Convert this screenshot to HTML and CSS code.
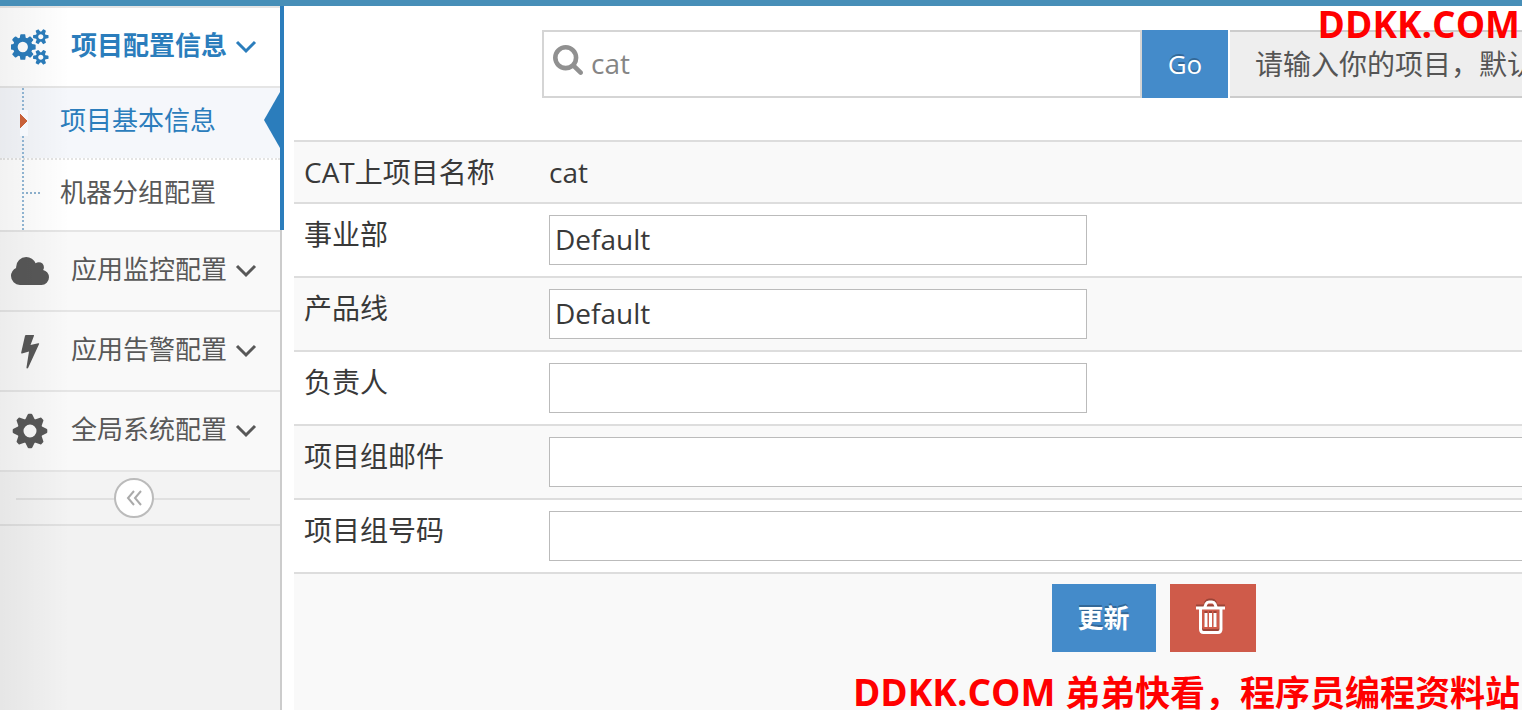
FILE: index.html
```html
<!DOCTYPE html>
<html lang="zh-CN">
  <head>
    <meta charset="UTF-8" />
    <meta name="viewport" content="width=device-width, initial-scale=1.0" />
    <title>CAT</title>
    <link rel="stylesheet" href="styles.css">
  </head>
  <body>
    <header class="navbar"></header>
    <div class="layout">
      <nav class="sidebar">
        <ul class="nav-list">
          <li class="open">
            <a class="nav-link" href="#">
              <span class="nav-icon">
                <svg width="39" height="36" viewBox="0 0 1920 1792" fill="currentColor"><path d="M832 896q0-106-75-181t-181-75-181 75-75 181 75 181 181 75 181-75 75-181zm768 512q0-52-38-90t-90-38-90 38-38 90q0 53 37.5 90.5t90.5 37.5 90.5-37.5 37.5-90.5zm0-1024q0-52-38-90t-90-38-90 38-38 90q0 53 37.5 90.5t90.5 37.5 90.5-37.5 37.5-90.5zm-384 421v185q0 10-7 19.5t-16 10.5l-155 24q-11 35-32 76 34 48 90 115 7 10 7 20 0 12-7 19-23 30-82.5 89.5t-78.5 59.5q-11 0-21-7l-115-90q-37 19-77 31-11 108-23 155-7 24-30 24h-186q-11 0-20-7.5t-10-17.5l-23-153q-34-10-75-31l-118 89q-7 7-20 7-11 0-21-8-144-133-144-160 0-9 7-19 10-14 41-53t47-61q-23-44-35-82l-152-24q-10-1-17-9.5t-7-19.5v-185q0-10 7-19.5t16-10.5l155-24q11-35 32-76-34-48-90-115-7-11-7-20 0-12 7-20 22-30 82-89t79-59q11 0 21 7l115 90q34-18 77-32 11-108 23-154 7-24 30-24h186q11 0 20 7.5t10 17.5l23 153q34 10 75 31l118-89q8-7 20-7 11 0 21 8 144 133 144 160 0 9-7 19-12 16-42 54t-45 60q23 48 34 82l152 23q10 2 17 10.5t7 19.5zm640 533v140q0 16-149 31-12 27-30 52 51 113 51 138 0 4-4 7-122 71-124 71-8 0-46-47t-52-68q-20 2-30 2t-30-2q-14 21-52 68t-46 47q-2 0-124-71-4-3-4-7 0-25 51-138-18-25-30-52-149-15-149-31v-140q0-16 149-31 13-29 30-52-51-113-51-138 0-4 4-7 4-2 35-20t59-34 30-16q8 0 46 46.5t52 67.5q20-2 30-2t30 2q51-71 92-112l6-2q4 0 124 70 4 3 4 7 0 25-51 138 17 23 30 52 149 15 149 31zm0-1024v140q0 16-149 31-12 27-30 52 51 113 51 138 0 4-4 7-122 71-124 71-8 0-46-47t-52-68q-20 2-30 2t-30-2q-14 21-52 68t-46 47q-2 0-124-71-4-3-4-7 0-25 51-138-18-25-30-52-149-15-149-31v-140q0-16 149-31 13-29 30-52-51-113-51-138 0-4 4-7 4-2 35-20t59-34 30-16q8 0 46 46.5t52 67.5q20-2 30-2t30 2q51-71 92-112l6-2q4 0 124 70 4 3 4 7 0 25-51 138 17 23 30 52 149 15 149 31z"/></svg>
              </span>
              <span class="nav-text">项目配置信息</span>
              <svg class="chevron" width="22" height="14" viewBox="0 0 22 14"><path d="M2 2l9 9 9-9"/></svg>
            </a>
            <ul class="submenu">
              <li class="active"><a href="#">项目基本信息</a></li>
              <li><a href="#">机器分组配置</a></li>
            </ul>
          </li>
          <li>
            <a class="nav-link" href="#">
              <span class="nav-icon">
                <svg width="38" height="28" viewBox="64 128 1920 1408" fill="currentColor"><path d="M1984 1152q0 159-112.5 271.5t-271.5 112.5h-1088q-185 0-316.5-131.5t-131.5-316.5q0-132 71-241.5t187-163.5q-2-28-2-43 0-212 150-362t362-150q158 0 286.5 88t187.5 230q70-62 166-62 106 0 181 75t75 181q0 75-41 138 129 30 213 134.5t84 239.5z"/></svg>
              </span>
              <span class="nav-text">应用监控配置</span>
              <svg class="chevron" width="22" height="14" viewBox="0 0 22 14"><path d="M2 2l9 9 9-9"/></svg>
            </a>
          </li>
          <li>
            <a class="nav-link" href="#">
              <span class="nav-icon">
                <svg width="20" height="36" viewBox="0 0 20 36" fill="currentColor"><path d="M6 2h7.500q.8 0 .5.800L10.500 12l7.800-1.800q1.200-.2.800.9L8.200 34.800q-.5.900-1.300.7-.6-.2-.4-1.200L9 18.500 2 20.500q-1.100.2-.8-1L5 2.800Q5.200 2 6 2z"/></svg>
              </span>
              <span class="nav-text">应用告警配置</span>
              <svg class="chevron" width="22" height="14" viewBox="0 0 22 14"><path d="M2 2l9 9 9-9"/></svg>
            </a>
          </li>
          <li>
            <a class="nav-link" href="#">
              <span class="nav-icon">
                <svg width="36" height="36" viewBox="-18 -18 36 36" fill="currentColor">
                  <circle r="9.500" fill="none" stroke="currentColor" stroke-width="6"/>
                  <path id="tooth" d="M-5-11L-2.300-16.500Q-2-17.300-1.300-17.300H1.300Q2-17.300 2.300-16.500L5-11z"/>
                  <use href="#tooth" transform="rotate(45)"/>
                  <use href="#tooth" transform="rotate(90)"/>
                  <use href="#tooth" transform="rotate(135)"/>
                  <use href="#tooth" transform="rotate(180)"/>
                  <use href="#tooth" transform="rotate(225)"/>
                  <use href="#tooth" transform="rotate(270)"/>
                  <use href="#tooth" transform="rotate(315)"/>
                </svg>
              </span>
              <span class="nav-text">全局系统配置</span>
              <svg class="chevron" width="22" height="14" viewBox="0 0 22 14"><path d="M2 2l9 9 9-9"/></svg>
            </a>
          </li>
        </ul>
        <div class="sidebar-toggle">
          <button type="button" aria-label="收起菜单">
            <svg width="16" height="18" viewBox="0 0 16 18"><path d="M8 2L2 9l6 7M15 2L9 9l6 7"/></svg>
          </button>
        </div>
      </nav>

      <main class="content">
        <form class="search">
          <label class="search-box">
            <svg width="30" height="30" viewBox="64 128 1664 1664" fill="currentColor"><path d="M1216 832q0-185-131.500-316.500t-316.500-131.500-316.500 131.500-131.500 316.500 131.500 316.500 316.500 131.500 316.500-131.500 131.500-316.500zm512 832q0 52-38 90t-90 38q-54 0-90-38l-343-342q-179 124-399 124-143 0-273.500-55.500t-225-150-150-225-55.500-273.500 55.500-273.500 150-225 225-150 273.500-55.500 273.500 55.500 225 150 150 225 55.500 273.500q0 220-124 399l343 343q37 37 37 90z"/></svg>
            <input type="text" value="cat" aria-label="项目">
          </label>
          <button class="btn btn-primary" type="button">Go</button>
          <span class="search-hint">请输入你的项目，默认</span>
        </form>

        <table class="form-table">
          <tr>
            <td class="name">CAT上项目名称</td>
            <td>cat</td>
          </tr>
          <tr>
            <td class="name"><label for="department">事业部</label></td>
            <td><input type="text" id="department" value="Default"></td>
          </tr>
          <tr>
            <td class="name"><label for="product">产品线</label></td>
            <td><input type="text" id="product" value="Default"></td>
          </tr>
          <tr>
            <td class="name"><label for="owner">负责人</label></td>
            <td><input type="text" id="owner"></td>
          </tr>
          <tr>
            <td class="name"><label for="email">项目组邮件</label></td>
            <td><input class="wide" type="text" id="email"></td>
          </tr>
          <tr>
            <td class="name"><label for="phone">项目组号码</label></td>
            <td><input class="wide" type="text" id="phone"></td>
          </tr>
          <tr>
            <td colspan="2">
              <div class="actions">
                <button class="btn btn-primary btn-update" type="button">更新</button>
                <button class="btn btn-danger" type="button" aria-label="删除">
                  <svg width="30" height="36" viewBox="0 0 30 36"><path d="M0 8h29M8.500 8l1.500-4q1-2 3-2h3q2 0 3 2l1.500 4M4.500 8v21q0 3.500 3 3.500h14.500q3 0 3-3.500V8"/><path d="M10 13v14M14.500 13v14M19 13v14"/></svg>
                </button>
              </div>
            </td>
          </tr>
        </table>
      </main>
    </div>

    <div class="mark mark-top">DDKK.COM</div>
    <div class="mark mark-bottom">DDKK.COM <span>弟弟快看，程序员编程资料站</span></div>
  </body>
</html>
```
FILE: styles.css
```css
* {
  box-sizing: border-box;
}

body {
  margin: 0;
  position: relative;
  height: 100vh;
  display: flex;
  flex-direction: column;
  overflow: hidden;
  background: #fff;
  color: #393939;
  font-family: "Open Sans", "Noto Sans CJK SC", sans-serif;
  font-size: 28px;
  line-height: 38px;
}

ul {
  list-style: none;
  margin: 0;
  padding: 0;
}

a {
  color: inherit;
  text-decoration: none;
}

input,
button {
  font: inherit;
  border-radius: 0;
}

.navbar {
  flex: none;
  height: 6px;
  background: #478fb8;
}

.layout {
  flex: 1;
  display: flex;
}

/* sidebar */
.sidebar {
  position: relative;
  flex: none;
  width: 282px;
  background: #f2f2f2;
  border-right: 2px solid #ccc;
  color: #585858;
  font-size: 26px;
}

.sidebar::after {
  content: "";
  position: absolute;
  top: 0;
  bottom: 0;
  left: 0;
  width: 70px;
  background: linear-gradient(to right, rgba(0, 0, 0, 0.05), rgba(0, 0, 0, 0.03) 40%, rgba(0, 0, 0, 0));
  pointer-events: none;
}

.nav-list {
  border-top: 2px solid #e5e5e5;
}

.nav-list > li {
  position: relative;
  border-bottom: 2px solid #e5e5e5;
}

.nav-link {
  display: flex;
  align-items: center;
  height: 78px;
  background: #f9f9f9;
}

.nav-icon {
  display: flex;
  justify-content: center;
  width: 60px;
  margin-right: 11px;
}

.nav-text {
  padding-bottom: 4px;
}

.chevron {
  margin-left: 8px;
}

.chevron path,
.sidebar-toggle path {
  fill: none;
  stroke: currentColor;
  stroke-width: 3;
}

.open > .nav-link {
  background: #fff;
  color: #2b7dbc;
  font-weight: bold;
}

.open::after {
  content: "";
  position: absolute;
  top: -2px;
  bottom: 0;
  right: -4px;
  width: 4px;
  background: #2b7dbc;
}

.submenu {
  position: relative;
  border-top: 2px solid #e5e5e5;
  background: #fff;
}

.submenu::before {
  content: "";
  position: absolute;
  top: 0;
  bottom: 0;
  left: 22px;
  width: 2px;
  background: repeating-linear-gradient(#8fb3d0 0 2px, transparent 2px 4px);
  z-index: 1;
}

.submenu li {
  position: relative;
}

.submenu li + li {
  border-top: 2px dotted #e4e4e4;
}

.submenu a {
  display: block;
  padding: 13px 0 19px 60px;
}

.submenu li + li::before {
  content: "";
  position: absolute;
  top: 32px;
  left: 24px;
  width: 16px;
  height: 2px;
  background: repeating-linear-gradient(to right, transparent 0 2px, #8fb3d0 2px 4px);
}

.submenu .active {
  background: #f5f7fb;
  color: #2b7dbc;
}

.submenu .active::before {
  content: "";
  position: absolute;
  top: 22px;
  left: 20px;
  width: 8px;
  height: 26px;
  background:
    conic-gradient(from 229deg at 100% 50%, #c86139 82deg, transparent 0) 0 4px / 8px 14px no-repeat,
    #f5f7fb;
  z-index: 2;
}

.submenu .active::after {
  content: "";
  position: absolute;
  top: 4px;
  right: 0;
  border: solid transparent;
  border-width: 28px 16px 28px 0;
  border-right-color: #2b7dbc;
}

.sidebar-toggle {
  display: flex;
  justify-content: center;
  height: 54px;
  padding: 6px 12px 0 0;
  border-bottom: 2px solid #e0e0e0;
  background: linear-gradient(#e0e0e0, #e0e0e0) 16px 26px / 234px 2px no-repeat, #f3f3f3;
}

.sidebar-toggle button {
  display: flex;
  align-items: center;
  justify-content: center;
  width: 40px;
  height: 40px;
  padding: 0;
  border: 2px solid #bbb;
  border-radius: 50%;
  background: #fff;
  color: #aaa;
}

.sidebar-toggle path {
  stroke-width: 2;
}

/* main area */
.content {
  flex: 1;
  min-width: 0;
  padding: 24px 0 0 12px;
}

.search {
  display: flex;
  margin: 0 0 42px 248px;
  overflow: hidden;
  white-space: nowrap;
}

.search-box {
  flex: none;
  display: flex;
  align-items: center;
  width: 600px;
  height: 68px;
  padding: 0 9px;
  border: 2px solid #d5d5d5;
  color: #909090;
}

.search-box svg {
  margin-bottom: 8px;
}

.search-box input {
  flex: 1;
  padding: 0 8px 2px;
  border: none;
  outline: none;
  color: #858585;
}

.btn {
  flex: none;
  display: flex;
  align-items: center;
  justify-content: center;
  min-width: 86px;
  height: 68px;
  padding: 0 25px;
  border: none;
  color: #fff;
  font-size: 26px;
  text-shadow: 0 -2px 0 rgba(0, 0, 0, 0.25);
}

.btn-primary {
  background: #448bca;
}

.btn-danger {
  padding: 0 30px 0 26px;
  background: #cf5b4a;
}

.btn-update {
  padding: 0 26px;
  font-weight: bold;
}

.btn-danger svg {
  flex: none;
  fill: none;
  stroke: #fff;
  stroke-width: 3;
  filter: drop-shadow(0 -2px 0 rgba(0, 0, 0, 0.25));
}

.search-hint {
  flex: 1;
  height: 68px;
  margin-left: 2px;
  padding: 13px 0 13px 25px;
  border: solid #ccc;
  border-width: 2px 0;
  background: #eee;
  color: #555;
}

/* the table is wider than the visible area and is cut off on the right */
.form-table {
  width: 140%;
  table-layout: fixed;
  border-collapse: separate;
  border-spacing: 0;
}

.form-table td {
  padding: 11px 10px;
  border-top: 2px solid #ddd;
  vertical-align: top;
}

.form-table .name {
  width: 245px;
}

.form-table tr:nth-child(odd) {
  background: #f9f9f9;
}

.form-table tr:last-child td {
  height: 140px;
  padding-top: 10px;
}

.form-table input {
  display: block;
  width: 538px;
  height: 50px;
  padding: 0 5px 2px;
  border: 1px solid #bbb;
  background: #fff;
  color: #393939;
}

.form-table input.wide {
  width: 100%;
}

.actions {
  display: flex;
  justify-content: center;
  gap: 14px;
}

/* site marks over the page */
.mark {
  position: absolute;
  right: 2px;
  color: #f00;
  font-size: 37px;
  font-weight: bold;
  line-height: 48px;
  white-space: nowrap;
}

.mark-top {
  top: 0;
}

.mark-bottom {
  bottom: -7px;
}

.mark-bottom span {
  font-size: 35px;
}
```
